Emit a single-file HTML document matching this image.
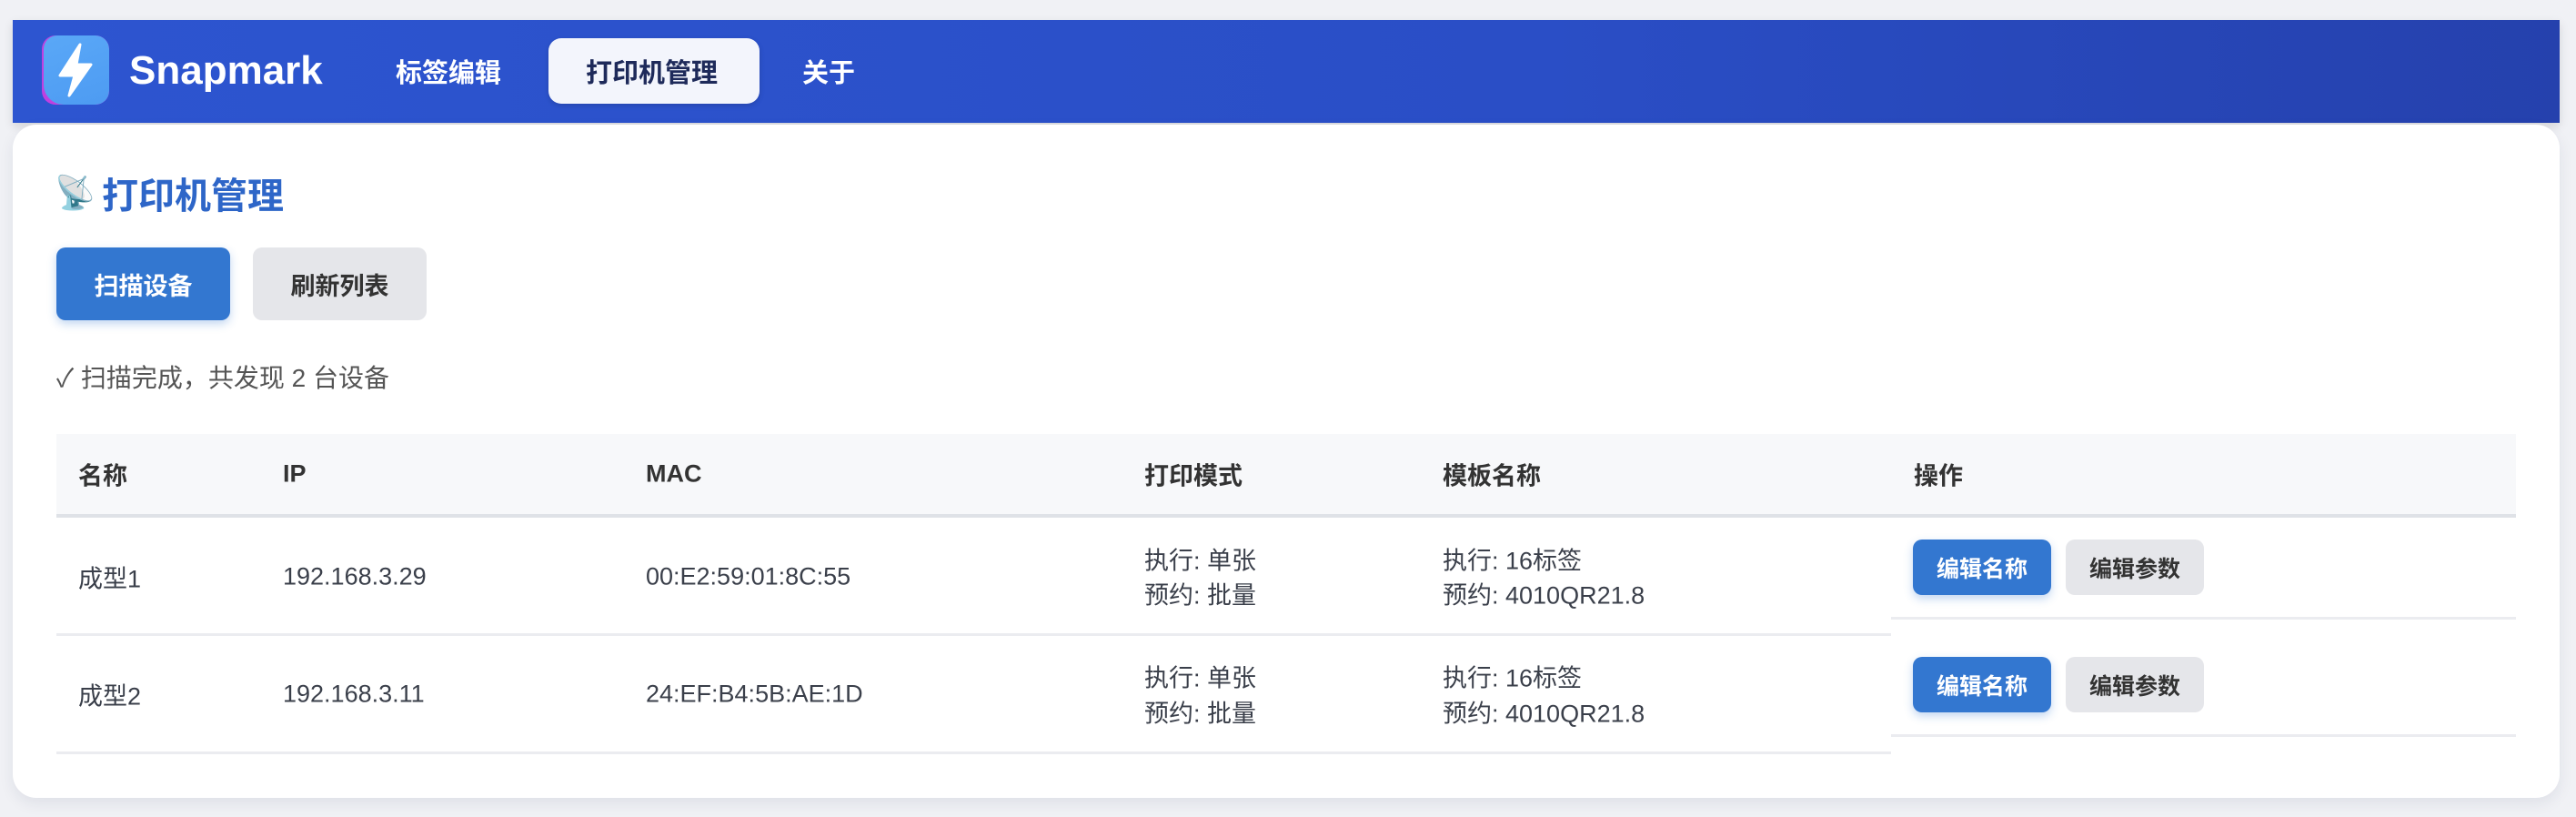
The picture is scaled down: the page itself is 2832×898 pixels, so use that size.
<!DOCTYPE html>
<html><head><meta charset="utf-8"><style>
*{margin:0;padding:0;box-sizing:border-box}
body{width:2832px;height:898px;background:#f0f1f5;position:relative;overflow:hidden;font-family:"Liberation Sans","Noto Sans CJK SC",sans-serif;}
.a{position:absolute;white-space:nowrap}
.hdr{left:14px;top:22px;width:2800px;height:113px;background:linear-gradient(90deg,#2d55d0,#2a4ec6 60%,#2541ad);box-shadow:0 4px 10px rgba(0,0,0,.12)}
.card{left:14px;top:137px;width:2800px;height:740px;background:#fff;border-radius:26px;box-shadow:0 6px 16px rgba(30,40,80,.08)}
.nav{font-size:29px;font-weight:bold;color:#fff;top:78px;transform:translateY(-50%)}
.btn{border-radius:10px;font-weight:bold;display:flex;align-items:center;justify-content:center}
.blue{background:#3377d0;color:#fff;box-shadow:0 4px 10px rgba(51,119,208,.3)}
.gray{background:#e5e6ea;color:#333}
.th{font-size:27px;font-weight:bold;color:#333;top:521px;transform:translateY(-50%)}
.td{font-size:27px;color:#3a3f4a;transform:translateY(-50%)}
.line{height:3px;background:#ebecf0}
</style></head><body>
<div class="a hdr"></div>
<div class="a" style="left:46px;top:39px;width:74px;height:76px;border-radius:15px;background:#c040e0;overflow:hidden">
 <div style="position:absolute;left:2px;top:0;width:72px;height:76px;border-radius:15px 15px 15px 22px;background:linear-gradient(160deg,#5aa8f7,#4d9bf2)"></div>
 <svg style="position:absolute;left:0;top:0" width="74" height="76" viewBox="0 0 74 76"><path d="M42 10 L20 44 L36 44 L30 66 L54 32 L38 32 Z" fill="#fff" stroke="#fff" stroke-width="3" stroke-linejoin="round"/></svg>
</div>
<div class="a" style="left:142px;top:78px;transform:translateY(-50%);font-size:44px;font-weight:bold;color:#fff">Snapmark</div>
<div class="a nav" style="left:435px">标签编辑</div>
<div class="a" style="left:603px;top:42px;width:232px;height:72px;border-radius:14px;background:#f3f5fc;box-shadow:0 2px 6px rgba(0,0,0,.15)"></div>
<div class="a nav" style="left:644px;color:#1e2a5a">打印机管理</div>
<div class="a nav" style="left:882px">关于</div>
<div class="a card"></div>
<div class="a" style="left:60px;top:212px;transform:translateY(-50%);font-size:36px">📡</div>
<div class="a" style="left:112px;top:212px;transform:translateY(-50%);font-size:40px;font-weight:bold;color:#2e66c8">打印机管理</div>
<div class="a btn blue" style="left:62px;top:272px;width:191px;height:80px;font-size:27px">扫描设备</div>
<div class="a btn gray" style="left:278px;top:272px;width:191px;height:80px;font-size:27px">刷新列表</div>
<div class="a" style="left:62px;top:414px;transform:translateY(-50%);font-size:28px;color:#555">✓ 扫描完成，共发现 2 台设备</div>
<div class="a" style="left:62px;top:477px;width:2704px;height:88px;background:#f7f8fa"></div>
<div class="a" style="left:62px;top:565px;width:2704px;height:4px;background:#dfe2e7"></div>
<div class="a th" style="left:86px">名称</div>
<div class="a th" style="left:311px">IP</div>
<div class="a th" style="left:710px">MAC</div>
<div class="a th" style="left:1258px">打印模式</div>
<div class="a th" style="left:1586px">模板名称</div>
<div class="a th" style="left:2104px">操作</div>
<div class="a td" style="left:86px;top:634px">成型1</div>
<div class="a td" style="left:311px;top:634px">192.168.3.29</div>
<div class="a td" style="left:710px;top:634px">00:E2:59:01:8C:55</div>
<div class="a td" style="left:1258px;top:614px">执行: 单张</div>
<div class="a td" style="left:1258px;top:652px">预约: 批量</div>
<div class="a td" style="left:1586px;top:614px">执行: 16标签</div>
<div class="a td" style="left:1586px;top:652px">预约: 4010QR21.8</div>
<div class="a btn blue" style="left:2103px;top:593px;width:152px;height:61px;font-size:25px">编辑名称</div>
<div class="a btn gray" style="left:2271px;top:593px;width:152px;height:61px;font-size:25px">编辑参数</div>
<div class="a line" style="left:62px;top:696px;width:2017px"></div>
<div class="a line" style="left:2079px;top:678px;width:687px"></div>
<div class="a td" style="left:86px;top:763px">成型2</div>
<div class="a td" style="left:311px;top:763px">192.168.3.11</div>
<div class="a td" style="left:710px;top:763px">24:EF:B4:5B:AE:1D</div>
<div class="a td" style="left:1258px;top:743px">执行: 单张</div>
<div class="a td" style="left:1258px;top:782px">预约: 批量</div>
<div class="a td" style="left:1586px;top:743px">执行: 16标签</div>
<div class="a td" style="left:1586px;top:782px">预约: 4010QR21.8</div>
<div class="a btn blue" style="left:2103px;top:722px;width:152px;height:61px;font-size:25px">编辑名称</div>
<div class="a btn gray" style="left:2271px;top:722px;width:152px;height:61px;font-size:25px">编辑参数</div>
<div class="a line" style="left:62px;top:826px;width:2017px"></div>
<div class="a line" style="left:2079px;top:807px;width:687px"></div>
</body></html>
